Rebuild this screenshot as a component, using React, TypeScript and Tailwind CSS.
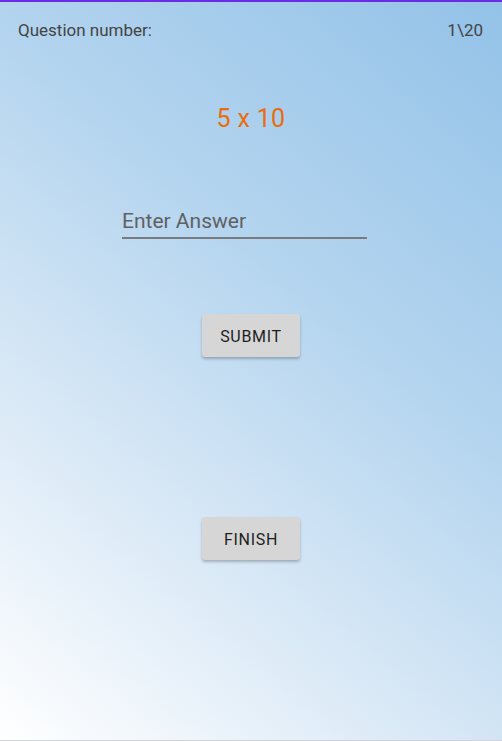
export default function App() {
  return (
    <div className="relative h-[741px] w-[502px] overflow-hidden bg-[linear-gradient(40deg,#ffffff_0%,#d8e8f6_32%,#b5d5ef_60%,#93c2e8_100%)] font-['Roboto',sans-serif]">
      <div className="h-[2px] bg-[#6a2ce6]" />
      <div className="flex items-center justify-between pl-[18px] pr-[19px] pt-[18px] text-[17px] leading-[20px] text-[#444]">
        <span>Question number:</span>
        <span>1\20</span>
      </div>
      <div className="mt-[64px] text-center text-[25px] leading-[30px] tracking-[0.3px] text-[#e86d0e]">5 x 10</div>
      <div className="mt-[72px] flex justify-center">
        <div className="mr-[13px] w-[245px] border-b-2 border-[#787c80] pb-[1px] text-[21px] leading-[30px] text-[#5f6163]">
          Enter Answer
        </div>
      </div>
      <div className="mt-[75px] flex justify-center">
        <button className="h-[43px] w-[98px] rounded-[3px] bg-[#d6d6d6] pt-[2px] text-[16px] font-normal tracking-[0.7px] text-[#1e1e1e] shadow-[0_2px_3px_rgba(0,0,0,0.25)]">
          SUBMIT
        </button>
      </div>
      <div className="mt-[160px] flex justify-center">
        <button className="h-[43px] w-[98px] rounded-[3px] bg-[#d6d6d6] pt-[2px] text-[16px] font-normal tracking-[0.7px] text-[#1e1e1e] shadow-[0_2px_3px_rgba(0,0,0,0.25)]">
          FINISH
        </button>
      </div>
      <div className="absolute bottom-0 left-0 h-px w-full bg-[#d0d4d8]" />
    </div>
  )
}
